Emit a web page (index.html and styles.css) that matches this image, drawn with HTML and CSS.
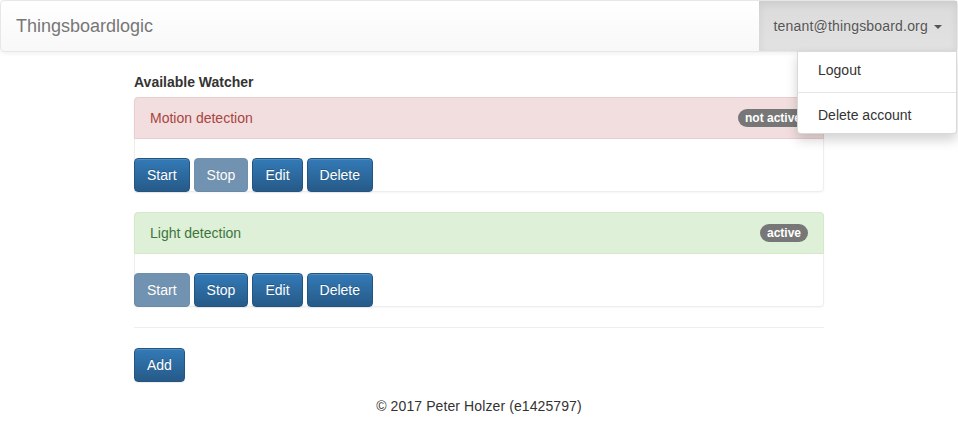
FILE: index.html
```html
<!DOCTYPE html>
<html lang="en">
<head>
<meta charset="utf-8">
<title>Thingsboardlogic</title>
<link rel="stylesheet" href="styles.css">
</head>
<body>
<nav class="navbar">
  <a class="brand" href="#">Thingsboardlogic</a>
  <div class="nav-right">
    <a class="toggle" href="#">tenant@thingsboard.org <span class="caret"></span></a>
    <ul class="dropdown">
      <li><a href="#">Logout</a></li>
      <li class="divider"></li>
      <li><a href="#">Delete account</a></li>
    </ul>
  </div>
</nav>
<main class="content">
  <label class="title">Available Watcher</label>
  <div class="panel panel-danger">
    <div class="panel-heading">
      <span>Motion detection</span>
      <span class="badge">not active</span>
    </div>
    <div class="panel-body">
      <button class="btn">Start</button>
      <button class="btn" disabled>Stop</button>
      <button class="btn">Edit</button>
      <button class="btn">Delete</button>
    </div>
  </div>
  <div class="panel panel-success">
    <div class="panel-heading">
      <span>Light detection</span>
      <span class="badge">active</span>
    </div>
    <div class="panel-body">
      <button class="btn" disabled>Start</button>
      <button class="btn">Stop</button>
      <button class="btn">Edit</button>
      <button class="btn">Delete</button>
    </div>
  </div>
  <hr class="sep">
  <button class="btn">Add</button>
  <footer class="footer">© 2017 Peter Holzer (e1425797)</footer>
</main>
</body>
</html>
```
FILE: styles.css
```css
* { box-sizing: border-box; }
html, body { margin: 0; padding: 0; }
body {
  font-family: "Liberation Sans", Arial, sans-serif;
  font-size: 14px;
  line-height: 20px;
  color: #333;
  background: #fff;
}
a { text-decoration: none; }

.navbar {
  display: flex;
  justify-content: space-between;
  align-items: stretch;
  height: 52px;
  border: 1px solid #e7e7e7;
  border-radius: 4px;
  background: linear-gradient(to bottom, #fff 0%, #f8f8f8 100%);
  box-shadow: inset 0 1px 0 rgba(255,255,255,.15), 0 1px 5px rgba(0,0,0,.075);
  margin-bottom: 20px;
}
.brand {
  padding: 15px;
  font-size: 18px;
  line-height: 20px;
  color: #777;
  text-shadow: 0 1px 0 rgba(255,255,255,.25);
}
.nav-right {
  position: relative;
}
.toggle {
  display: block;
  height: 50px;
  padding: 15px;
  color: #555;
  letter-spacing: .18px;
  background: linear-gradient(to bottom, #dbdbdb 0%, #e2e2e2 100%);
  box-shadow: inset 0 3px 9px rgba(0,0,0,.075);
  text-shadow: 0 1px 0 rgba(255,255,255,.25);
}
.caret {
  display: inline-block;
  width: 0;
  height: 0;
  margin-left: 2px;
  vertical-align: middle;
  border-top: 4px solid #555;
  border-right: 4px solid transparent;
  border-left: 4px solid transparent;
}
.dropdown {
  position: absolute;
  top: 100%;
  right: 0;
  z-index: 10;
  min-width: 160px;
  margin: 0;
  padding: 5px 0;
  list-style: none;
  background: #fff;
  border: 1px solid rgba(0,0,0,.15);
  border-radius: 0 0 4px 4px;
  box-shadow: 0 6px 12px rgba(0,0,0,.175);
}
.dropdown a {
  display: block;
  padding: 3px 20px;
  color: #333;
  white-space: nowrap;
}
.dropdown .divider {
  height: 1px;
  margin: 9px 0;
  background: #e5e5e5;
}

.content {
  width: 690px;
  margin: 0 auto;
}
.title {
  display: block;
  font-weight: bold;
  margin-bottom: 5px;
}
.panel {
  margin-bottom: 20px;
  background: #fff;
  border: 1px solid #eee;
  border-radius: 4px;
  box-shadow: 0 1px 2px rgba(0,0,0,.04);
}
.panel-heading {
  display: flex;
  justify-content: space-between;
  align-items: center;
  margin: -1px -1px 0 -1px;
  padding: 10px 15px;
  border: 1px solid transparent;
  border-radius: 4px 4px 0 0;
}
.panel-danger .panel-heading {
  color: #a94442;
  background: #f2dede;
  border-color: #ebccd1;
}
.panel-success .panel-heading {
  color: #3c763d;
  background: #dff0d8;
  border-color: #d6e9c6;
}
.panel-body {
  display: flex;
  gap: 4px;
  padding: 19px 0 0 0;
  margin: 0 -1px -1px -1px;
}
.badge {
  display: inline-block;
  min-width: 10px;
  padding: 3px 7px;
  font-size: 12px;
  font-weight: bold;
  line-height: 12px;
  color: #fff;
  background: #777;
  border-radius: 10px;
  white-space: nowrap;
}
.btn {
  display: inline-block;
  padding: 6px 12px;
  font-family: inherit;
  font-size: 14px;
  line-height: 20px;
  color: #fff;
  background: linear-gradient(to bottom, #337ab7 0%, #265a88 100%);
  border: 1px solid #245580;
  border-radius: 4px;
  text-shadow: 0 -1px 0 rgba(0,0,0,.2);
  box-shadow: inset 0 1px 0 rgba(255,255,255,.15), 0 1px 1px rgba(0,0,0,.075);
  cursor: pointer;
}
.btn:disabled {
  opacity: .65;
  background: #265a88;
  box-shadow: none;
  cursor: not-allowed;
}
.sep {
  margin: 20px 0;
  border: 0;
  border-top: 1px solid #eee;
}
.footer {
  margin-top: 14px;
  text-align: center;
  letter-spacing: .1px;
}
```
